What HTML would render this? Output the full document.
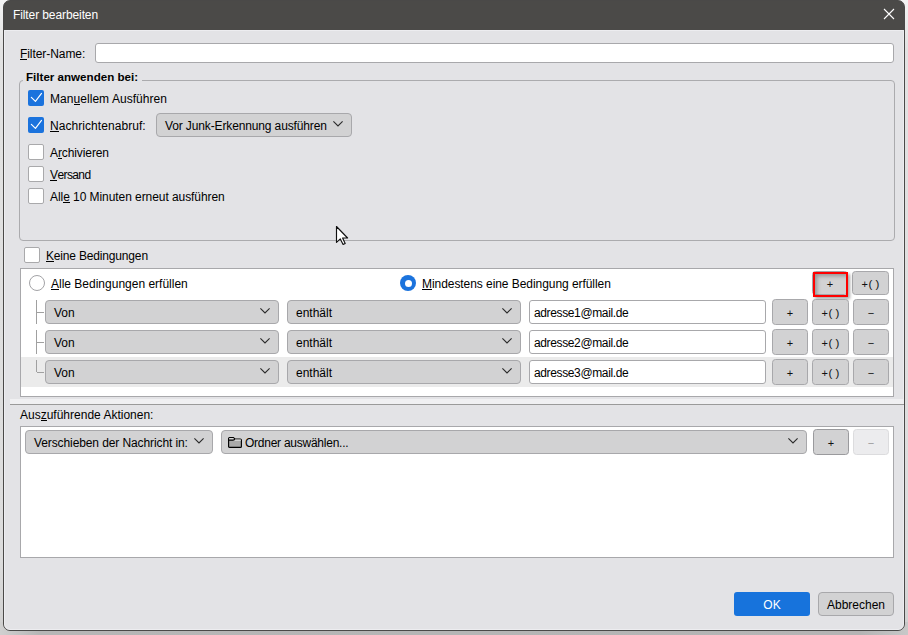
<!DOCTYPE html>
<html><head><meta charset="utf-8">
<style>
*{box-sizing:border-box;margin:0;padding:0}
html,body{width:908px;height:635px;overflow:hidden}
body{background:linear-gradient(180deg,#f4f4f4 0,#e2e2e2 50px,#dcdcdc 560px,#cfcfcf 635px);font-family:"Liberation Sans",sans-serif;font-size:12px;color:#000;position:relative}
.a{position:absolute}
.t{position:absolute;white-space:nowrap;line-height:14px;height:14px}
u{text-decoration:none;border-bottom:1px solid #000;display:inline-block;line-height:10px}
#shadowb{left:0;top:622px;width:908px;height:13px;background:linear-gradient(90deg,#d0d0d0,#b6b6b6 40px,#b4b4b4 860px,#c8c8c8);border-radius:0}
#shadowt{display:none}
#win{left:3px;top:0;width:902px;height:631px;background:linear-gradient(#4b4a48 0,#4b4a48 29px,#e3e3e6 29px);border:1px solid #4a4948;border-radius:7px;overflow:hidden}
#title{left:0;top:29px;width:900px;height:600px;border:1px solid #ededf0;border-radius:0 0 6px 6px}
.cb{position:absolute;width:16px;height:16px;border:1px solid #a9a9ab;background:#fff;border-radius:2px}
.cbc{position:absolute;width:16px;height:16px;background:#1b73dd;border-radius:2px}
.dd{position:absolute;height:24px;background:#d2d2d3;border:1px solid #a8a8ab;border-radius:4px}
.btn{position:absolute;width:36px;height:26px;background:#d2d2d3;border:1px solid #a8a8ab;border-radius:3.5px;text-align:center;line-height:24px;padding-top:1px;color:#111}
.inp{position:absolute;background:#fff;border:1px solid #a8a8ab;border-radius:3px}
.chev{position:absolute;width:10px;height:6px}
</style></head><body>
<div class="a" id="shadowt"></div><div class="a" id="shadowb"></div>
<div class="a" id="win">
  <div class="a" id="title"></div>
</div>
<!-- title -->
<div class="t" style="left:13px;top:8px;color:#fff;letter-spacing:-0.1px">Filter bearbeiten</div>
<svg class="a" style="left:883px;top:8px" width="12" height="12" viewBox="0 0 12 12"><path d="M1 1L11 11M11 1L1 11" stroke="#fff" stroke-width="1.1"/></svg>

<!-- filter name -->
<div class="t" style="left:20px;top:47px;letter-spacing:-0.07px"><u>F</u>ilter-Name:</div>
<div class="inp" style="left:95px;top:43px;width:799px;height:20px"></div>

<!-- fieldset -->
<div class="a" style="left:19px;top:80px;width:876px;height:161px;border:1px solid #ababae;border-radius:4px"></div>
<div class="a" style="left:23px;top:72px;width:119px;height:14px;background:#e3e3e6"></div>
<div class="t" style="left:26px;top:70px;font-weight:bold;font-size:11.6px">Filter anwenden bei:</div>

<div class="cbc" style="left:28px;top:90px"><svg class="a" style="left:0;top:0" width="16" height="16" viewBox="0 0 16 16"><path d="M3.35 7.4L7.45 11.4L13.5 3.4" fill="none" stroke="#fff" stroke-width="1.15" stroke-linecap="round" stroke-linejoin="round"/></svg></div>
<div class="t" style="left:50px;top:92px;letter-spacing:0.05px">Man<u>u</u>ellem Ausführen</div>
<div class="cbc" style="left:28px;top:117px"><svg class="a" style="left:0;top:0" width="16" height="16" viewBox="0 0 16 16"><path d="M3.35 7.4L7.45 11.4L13.5 3.4" fill="none" stroke="#fff" stroke-width="1.15" stroke-linecap="round" stroke-linejoin="round"/></svg></div>
<div class="t" style="left:50px;top:119px;letter-spacing:0.06px"><u>N</u>achrichtenabruf:</div>
<div class="dd" style="left:156px;top:113px;width:196px"></div>
<div class="t" style="left:165px;top:119px;letter-spacing:-0.13px">Vor Junk-Erkennung ausführen</div><svg class="a" style="left:333px;top:121px" width="10" height="6" viewBox="0 0 10 6"><path d="M0.4 0.4L5 5L9.6 0.4" fill="none" stroke="#2a2a2a" stroke-width="1.1"/></svg>

<div class="cb" style="left:28px;top:144px"></div>
<div class="t" style="left:50px;top:146px;letter-spacing:-0.1px">A<u>r</u>chivieren</div>
<div class="cb" style="left:28px;top:166px"></div>
<div class="t" style="left:50px;top:168px;letter-spacing:-0.6px"><u>V</u>ersand</div>
<div class="cb" style="left:28px;top:188px"></div>
<div class="t" style="left:50px;top:190px;letter-spacing:-0.065px">All<u>e</u> 10 Minuten erneut ausführen</div>

<!-- keine bedingungen -->
<div class="cb" style="left:24px;top:247px"></div>
<div class="t" style="left:46px;top:249px;letter-spacing:-0.17px"><u>K</u>eine Bedingungen</div>

<!-- conditions box -->
<div class="a" style="left:20px;top:268px;width:874px;height:129px;background:#fff;border:1px solid #a8a8ab"></div>
<div class="a" style="left:21px;top:357px;width:872px;height:30px;background:#ebebeb"></div>
<!-- radios -->
<div class="a" style="left:29px;top:275px;width:16px;height:16px;border:1px solid #a3a3a6;border-radius:50%;background:#fff"></div>
<div class="t" style="left:51px;top:277px"><u>A</u>lle Bedingungen erfüllen</div>
<div class="a" style="left:400px;top:275px;width:16px;height:16px;border-radius:50%;background:#1b73dd"><div class="a" style="left:4.5px;top:4.5px;width:7px;height:7px;border-radius:50%;background:#fff"></div></div>
<div class="t" style="left:422px;top:277px;letter-spacing:-0.06px"><u>M</u>indestens eine Bedingung erfüllen</div>
<!-- top buttons -->
<div class="btn" style="left:812px;top:271px;height:24px;line-height:22px"><span style="font-size:11px">+</span></div>
<div class="btn" style="left:852px;top:271px;height:24px;line-height:22px;width:37px"><span style="font-size:11px;margin-right:0.5px">+</span><span style="font-size:11.5px">( )</span></div>
<div class="a" style="left:813px;top:272px;width:35px;height:25px;border:2px solid #f00;box-shadow:2px 2px 3px rgba(0,0,0,.35), inset 3px 3px 4px -1px rgba(0,0,0,.3)"></div>

<div class="a" style="left:36px;top:300px;width:1px;height:24px;background:#a0a0a0"></div><div class="a" style="left:37px;top:312px;width:7px;height:1px;background:#a0a0a0"></div><div class="dd" style="left:45px;top:300px;width:234px"></div><div class="t" style="left:54px;top:306px">Von</div><svg class="a" style="left:260px;top:308px" width="10" height="6" viewBox="0 0 10 6"><path d="M0.4 0.4L5 5L9.6 0.4" fill="none" stroke="#2a2a2a" stroke-width="1.1"/></svg><div class="dd" style="left:287px;top:300px;width:234px"></div><div class="t" style="left:296px;top:306px">enthält</div><svg class="a" style="left:502px;top:308px" width="10" height="6" viewBox="0 0 10 6"><path d="M0.4 0.4L5 5L9.6 0.4" fill="none" stroke="#2a2a2a" stroke-width="1.1"/></svg><div class="inp" style="left:529px;top:300px;width:237px;height:24px"></div><div class="t" style="left:534px;top:306px;letter-spacing:-0.37px">adresse1@mail.de</div><div class="btn" style="left:772px;top:299px"><span style="font-size:11px">+</span></div><div class="btn" style="left:812px;top:299px;width:37px"><span style="font-size:11px;margin-right:0.5px">+</span><span style="font-size:11.5px">( )</span></div><div class="btn" style="left:853px;top:299px"><span style="font-size:11px">−</span></div>
<div class="a" style="left:36px;top:330px;width:1px;height:24px;background:#a0a0a0"></div><div class="a" style="left:37px;top:342px;width:7px;height:1px;background:#a0a0a0"></div><div class="dd" style="left:45px;top:330px;width:234px"></div><div class="t" style="left:54px;top:336px">Von</div><svg class="a" style="left:260px;top:338px" width="10" height="6" viewBox="0 0 10 6"><path d="M0.4 0.4L5 5L9.6 0.4" fill="none" stroke="#2a2a2a" stroke-width="1.1"/></svg><div class="dd" style="left:287px;top:330px;width:234px"></div><div class="t" style="left:296px;top:336px">enthält</div><svg class="a" style="left:502px;top:338px" width="10" height="6" viewBox="0 0 10 6"><path d="M0.4 0.4L5 5L9.6 0.4" fill="none" stroke="#2a2a2a" stroke-width="1.1"/></svg><div class="inp" style="left:529px;top:330px;width:237px;height:24px"></div><div class="t" style="left:534px;top:336px;letter-spacing:-0.37px">adresse2@mail.de</div><div class="btn" style="left:772px;top:329px"><span style="font-size:11px">+</span></div><div class="btn" style="left:812px;top:329px;width:37px"><span style="font-size:11px;margin-right:0.5px">+</span><span style="font-size:11.5px">( )</span></div><div class="btn" style="left:853px;top:329px"><span style="font-size:11px">−</span></div>
<div class="a" style="left:36px;top:360px;width:1px;height:12px;background:#a0a0a0"></div><div class="a" style="left:37px;top:372px;width:7px;height:1px;background:#a0a0a0"></div><div class="dd" style="left:45px;top:360px;width:234px"></div><div class="t" style="left:54px;top:366px">Von</div><svg class="a" style="left:260px;top:368px" width="10" height="6" viewBox="0 0 10 6"><path d="M0.4 0.4L5 5L9.6 0.4" fill="none" stroke="#2a2a2a" stroke-width="1.1"/></svg><div class="dd" style="left:287px;top:360px;width:234px"></div><div class="t" style="left:296px;top:366px">enthält</div><svg class="a" style="left:502px;top:368px" width="10" height="6" viewBox="0 0 10 6"><path d="M0.4 0.4L5 5L9.6 0.4" fill="none" stroke="#2a2a2a" stroke-width="1.1"/></svg><div class="inp" style="left:529px;top:360px;width:237px;height:24px"></div><div class="t" style="left:534px;top:366px;letter-spacing:-0.37px">adresse3@mail.de</div><div class="btn" style="left:772px;top:359px"><span style="font-size:11px">+</span></div><div class="btn" style="left:812px;top:359px;width:37px"><span style="font-size:11px;margin-right:0.5px">+</span><span style="font-size:11.5px">( )</span></div><div class="btn" style="left:853px;top:359px"><span style="font-size:11px">−</span></div>

<!-- splitter -->
<div class="a" style="left:10px;top:399px;width:894px;height:5px;background:#f0f0f2"></div>
<div class="a" style="left:10px;top:404px;width:894px;height:1px;background:#9a9a9a"></div>

<div class="t" style="left:20px;top:408px">Aus<u>z</u>uführende Aktionen:</div>
<div class="a" style="left:20px;top:426px;width:874px;height:132px;background:#fff;border:1px solid #a8a8ab"></div>
<div class="dd" style="left:25px;top:430px;width:188px"></div><div class="t" style="left:34px;top:436px;letter-spacing:-0.1px">Verschieben der Nachricht in:</div><svg class="a" style="left:194px;top:438px" width="10" height="6" viewBox="0 0 10 6"><path d="M0.4 0.4L5 5L9.6 0.4" fill="none" stroke="#2a2a2a" stroke-width="1.1"/></svg>
<div class="dd" style="left:221px;top:430px;width:586px"></div>
<svg class="a" style="left:228px;top:437px" width="14" height="11" viewBox="0 0 14 11"><path d="M0.6 1.6Q0.6 0.6 1.6 0.6H5.4L6.9 2H12.4Q13.4 2 13.4 3V9.4Q13.4 10.4 12.4 10.4H1.6Q0.6 10.4 0.6 9.4Z" fill="#aaa" stroke="#000" stroke-width="1.15"/><path d="M1.2 1.2H5.2L6.2 2.3L5.2 2.6H1.2Z" fill="#f4f4f4"/><rect x="7" y="2.6" width="5.9" height="1" fill="#f0f0f0"/><path d="M0.6 3.1H4.9Q5.6 3.1 6.1 2.6L6.9 2" fill="none" stroke="#000" stroke-width="1.1"/></svg>
<div class="t" style="left:245px;top:436px;letter-spacing:-0.25px">Ordner auswählen...</div><svg class="a" style="left:788px;top:438px" width="10" height="6" viewBox="0 0 10 6"><path d="M0.4 0.4L5 5L9.6 0.4" fill="none" stroke="#2a2a2a" stroke-width="1.1"/></svg>
<div class="btn" style="left:813px;top:429px;border-color:#9a9a9d"><span style="font-size:11px">+</span></div>
<div class="btn" style="left:853px;top:429px;background:#ececee;border-color:#dcdcde;color:#9a9a9a"><span style="font-size:11px">−</span></div>

<!-- bottom buttons -->
<div class="a" style="left:734px;top:592px;width:76px;height:24px;background:#1773dc;border-radius:3px"></div>
<div class="t" style="left:734px;top:598px;width:76px;text-align:center;color:#fff">OK</div>
<div class="dd" style="left:818px;top:592px;width:76px;height:24px"></div>
<div class="t" style="left:818px;top:598px;width:76px;text-align:center">Abbrechen</div>
<svg class="a" style="left:335px;top:225px" width="16" height="22" viewBox="0 0 16 22"><path d="M1.5 1.5V17.4L5.3 13.9L8.1 19.5L10.2 18.5L7.6 13H12.6Z" fill="#fff" stroke="#111" stroke-width="1.15" stroke-linejoin="round"/></svg>
</body></html>
